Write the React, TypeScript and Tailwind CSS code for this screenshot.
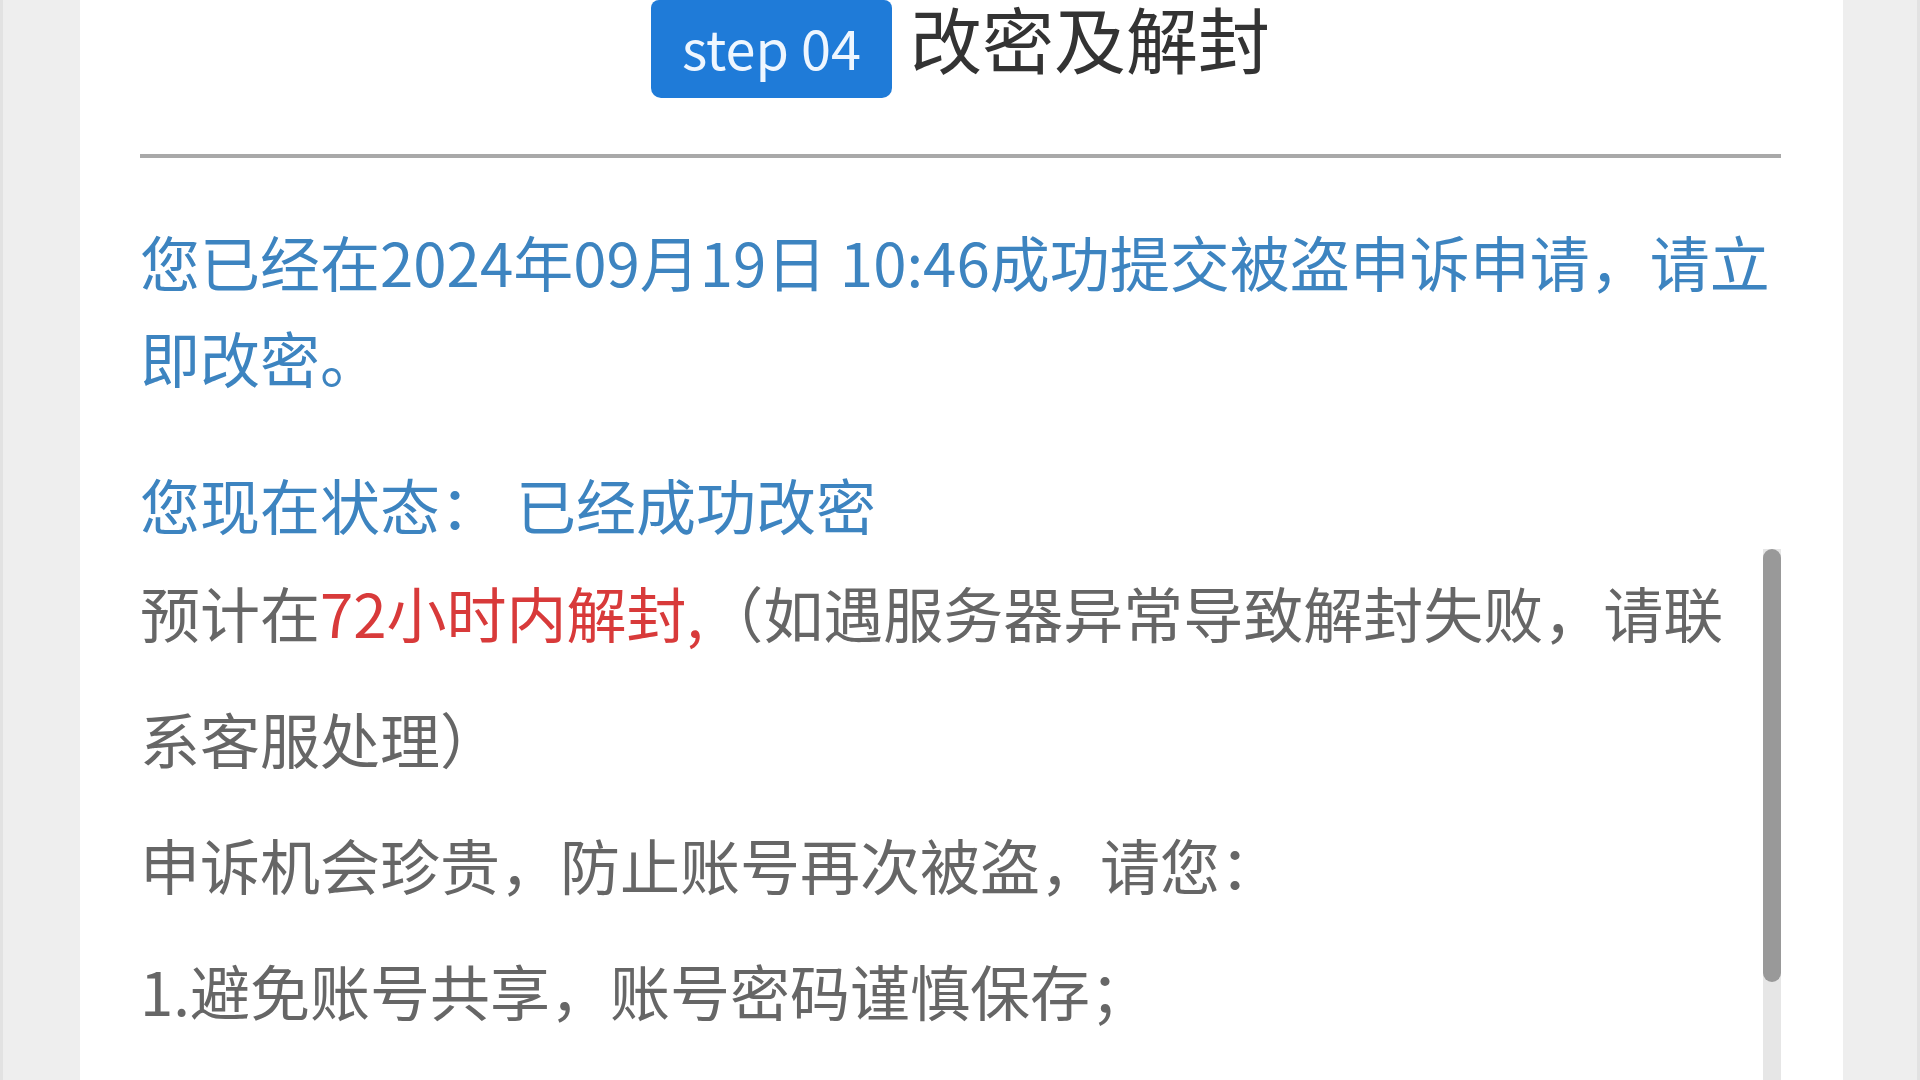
const font = { fontFamily: '"Noto Sans CJK SC", "Noto Sans", sans-serif' };

const tips = [
  "申诉机会珍贵，防止账号再次被盗，请您：",
  "1.避免账号共享，账号密码谨慎保存；",
  "2.定期修改密码，开启账号安全保护；",
];

export default function App() {
  return (
    <div className="flex h-[1080px] w-full overflow-hidden bg-[#eeeeee]" style={font}>
      <div className="w-[80px] shrink-0 border-l-[3px] border-[#e2e2e2]" />

      <main className="flex w-[1763px] shrink-0 flex-col bg-white pl-[60px] pr-[62px]">
        <header className="flex items-start justify-center gap-[18px]">
          <span className="flex h-[98px] items-start rounded-b-[10px] rounded-t-[8px] bg-[#1f7bd8] px-[31px] text-[54px] leading-[94px] text-[#eef6ff]">
            step 04
          </span>
          <h1 className="text-[72px] leading-[74px] font-normal text-[#333333]">改密及解封</h1>
        </header>

        <hr className="mt-[56px] h-[4px] border-0 bg-[#a9a9a9]" />

        <p className="mt-[55px] whitespace-nowrap text-[60px] leading-[96px] text-[#3d84c0]">
          您已经在2024年09月19日 10:46成功提交被盗申诉申请，请立
          <br />
          即改密。
        </p>

        <p className="mt-[54px] whitespace-nowrap text-[60px] leading-[90px] text-[#3d84c0]">
          您现在状态：<span className="ml-[16px]">已经成功改密</span>
        </p>

        <section className="flex min-h-0 flex-1">
          <div className="flex-1 text-[60px] leading-[126px] text-[#666666]">
            <p className="whitespace-nowrap">
              预计在<span className="text-[#d83a3a]">72小时内解封,</span>（如遇服务器异常导致解封失败，请联
              <br />
              系客服处理）
            </p>
            {tips.map((t) => (
              <p key={t} className="whitespace-nowrap">
                {t}
              </p>
            ))}
          </div>

          {/* scrollbar */}
          <div className="flex w-[18px] shrink-0 flex-col bg-[#e6e6e6]">
            <div className="h-[433px] rounded-full bg-[#999999]" />
          </div>
        </section>
      </main>

      <div className="flex-1 border-r-[3px] border-[#e2e2e2]" />
    </div>
  );
}
